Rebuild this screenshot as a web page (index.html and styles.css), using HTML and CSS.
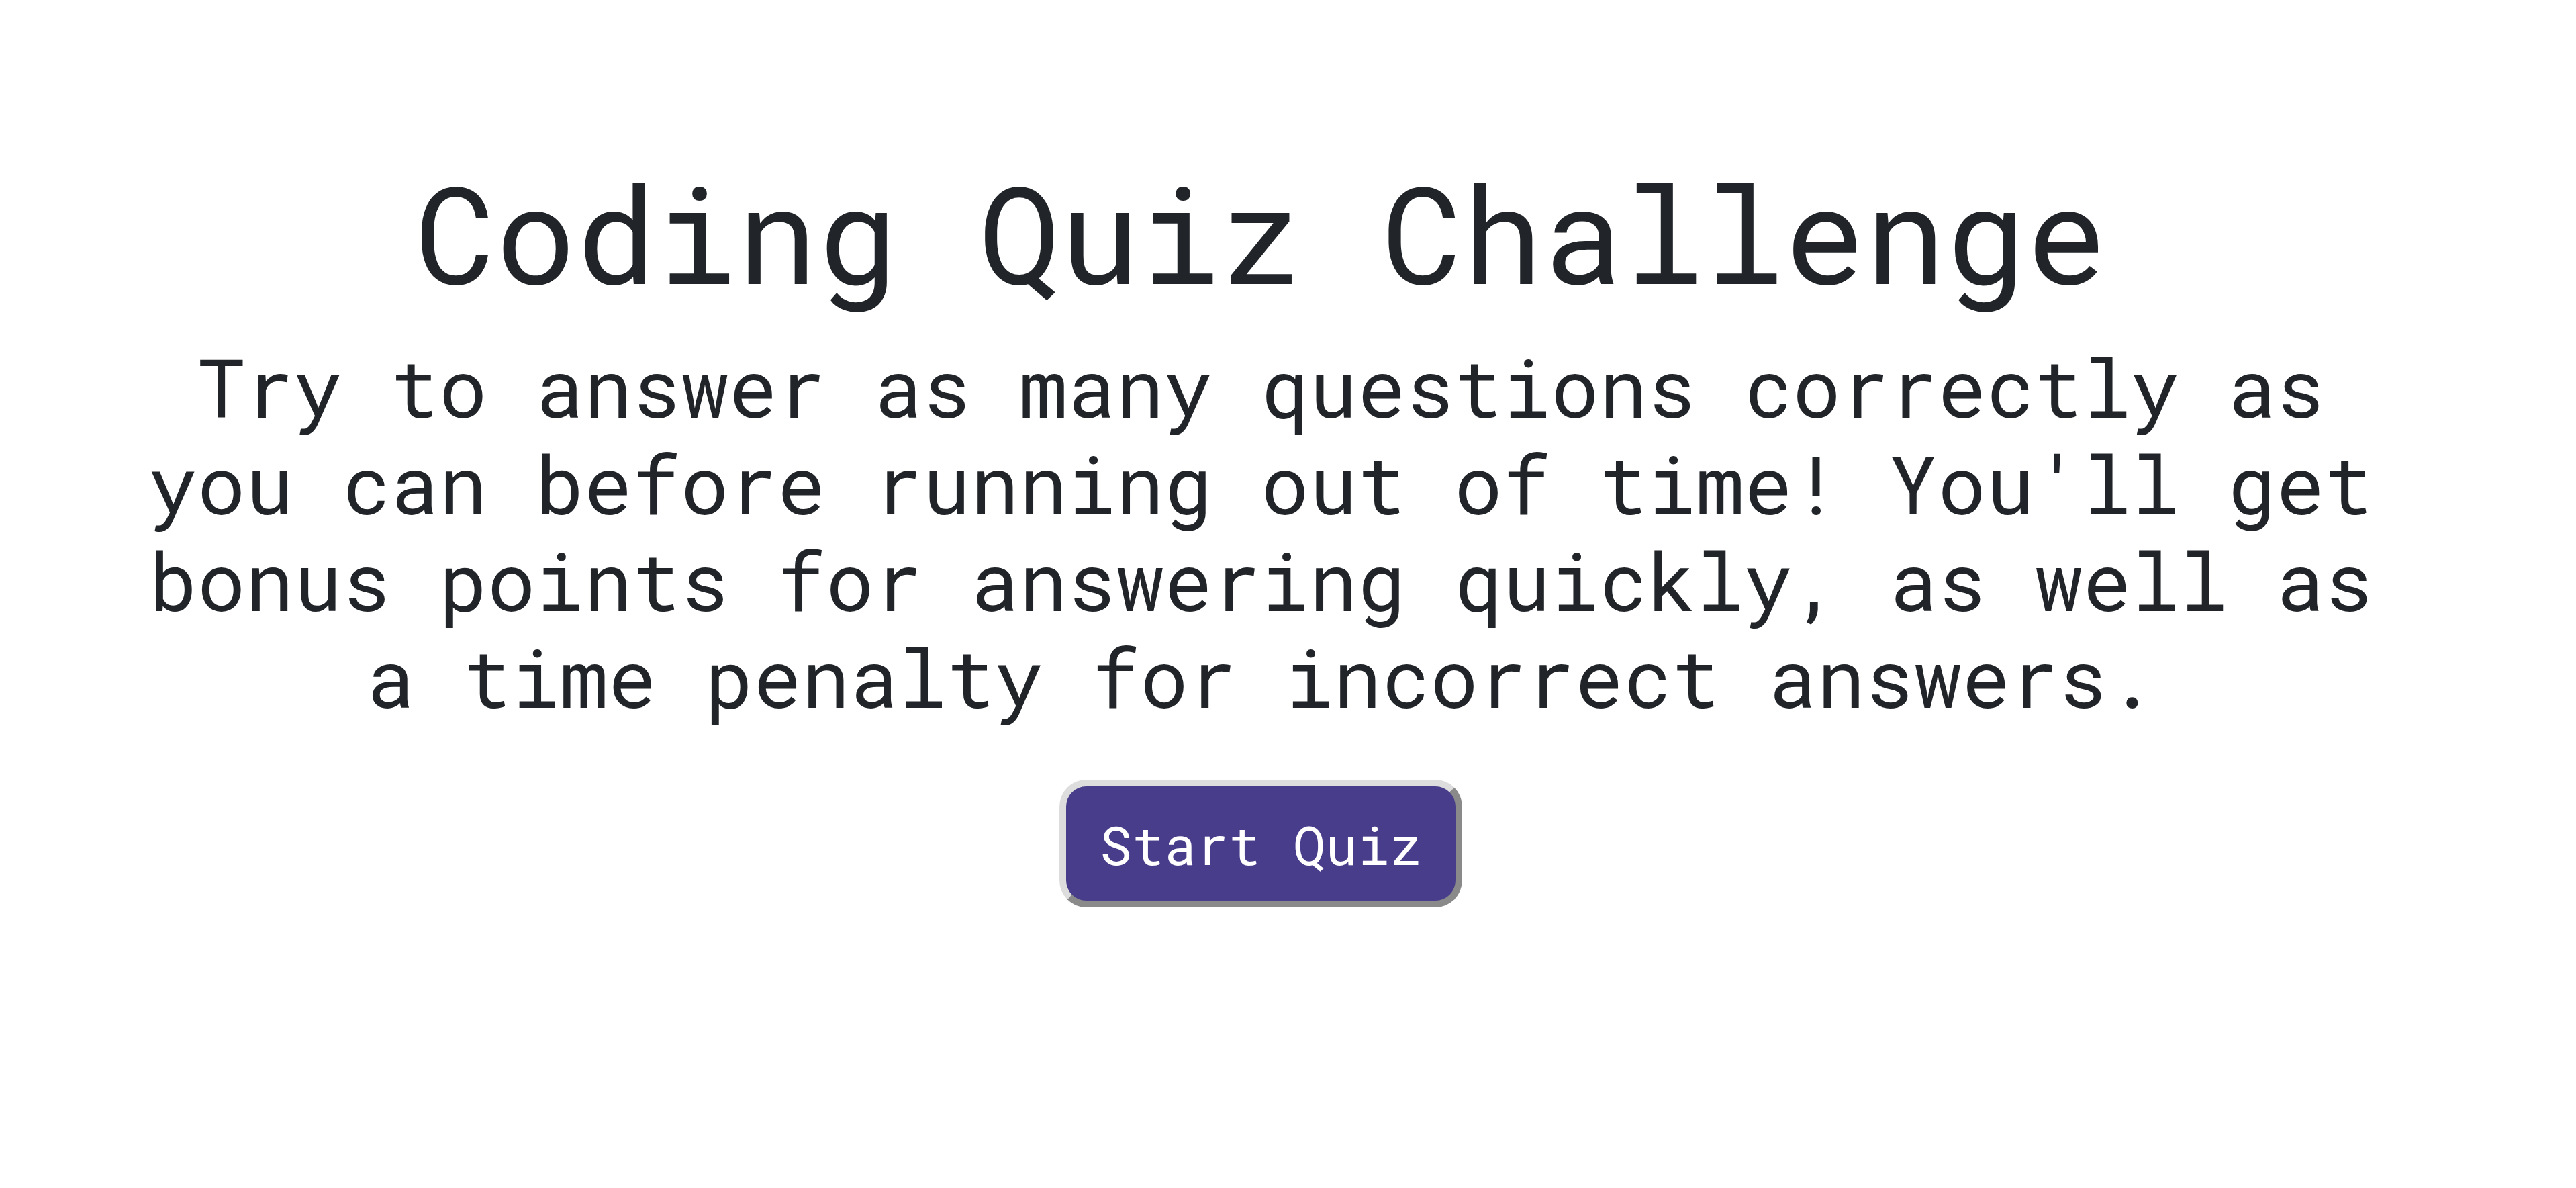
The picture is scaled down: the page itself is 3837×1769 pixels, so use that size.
FILE: index.html
```html
<!DOCTYPE html>
<html lang="en">
<head>
<meta charset="utf-8">
<title>Coding Quiz Challenge</title>
<link rel="stylesheet" href="styles.css">
</head>
<body>
<main class="start-screen">
  <h1 class="title">Coding Quiz Challenge</h1>
  <p class="intro">Try to answer as many questions correctly as you can before running out of time! You'll get bonus points for answering quickly, as well as a time penalty for incorrect answers.</p>
  <button class="start-btn" type="button">Start Quiz</button>
</main>
</body>
</html>
```

FILE: styles.css
```css
html, body {
  margin: 0;
  padding: 0;
  background: #ffffff;
}

body {
  font-family: "Roboto Mono", "DejaVu Sans Mono", monospace;
  color: #212529;
}

.start-screen {
  display: flex;
  flex-direction: column;
  align-items: center;
  padding: 225px 81px 0 0;
  text-align: center;
}

.title {
  margin: 0;
  font-size: 200px;
  font-weight: 400;
  line-height: 240px;
}

.intro {
  margin: 39px 0 0;
  max-width: 3400px;
  font-size: 120px;
  line-height: 144px;
}

.start-btn {
  margin-top: 81px;
  font-family: inherit;
  font-size: 80px;
  line-height: 120px;
  color: #ffffff;
  background: #483d8b;
  padding: 26px 50px 24px;
  border: 10px solid;
  border-color: #dddddd #8a8a8a #8a8a8a #dddddd;
  border-radius: 40px;
  cursor: pointer;
}
```
